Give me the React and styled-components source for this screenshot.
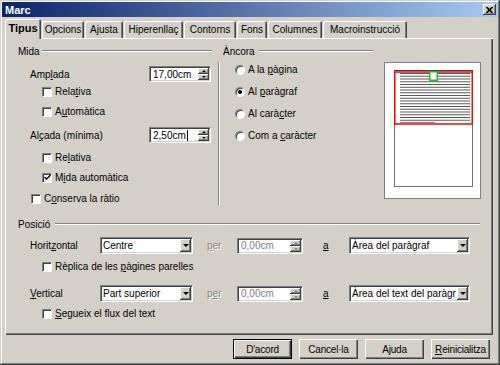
import React from "react";
import styled, { createGlobalStyle } from "styled-components";

const GlobalStyle = createGlobalStyle`
  html, body {
    margin: 0;
    padding: 0;
    background: #d4d0c8;
  }
  body {
    font-family: "Liberation Sans", Arial, sans-serif;
    font-size: 10px;
    color: #000;
  }
`;

const Window = styled.div`
  width: 500px;
  height: 365px;
  box-sizing: border-box;
  padding: 2px;
  background: #d4d0c8;
  box-shadow: inset -1px -1px #404040, inset 1px 1px #d4d0c8,
    inset -2px -2px #808080, inset 2px 2px #fff;
  display: flex;
  flex-direction: column;
`;

const TitleBar = styled.div`
  height: 15px;
  display: flex;
  align-items: center;
  justify-content: space-between;
  padding: 0 2px 0 3px;
  background: linear-gradient(to right, #0a246a, #a6caf0);
  color: #fff;
  font-weight: bold;
  font-size: 11px;
`;

const CloseButton = styled.div`
  width: 13px;
  height: 11px;
  box-sizing: border-box;
  background: #d4d0c8;
  box-shadow: inset -1px -1px #404040, inset 1px 1px #fff,
    inset -2px -2px #808080;
  display: flex;
  align-items: center;
  justify-content: center;
`;

const Body = styled.div`
  padding: 2px 5px 0 3px;
  display: flex;
  flex-direction: column;
`;

const TabRow = styled.div`
  display: flex;
  align-items: flex-end;
  gap: 1px;
  height: 19px;
  position: relative;
  z-index: 1;
`;

const Tab = styled.div`
  width: ${props => props.w}px;
  height: ${props => (props.active ? 20 : 17)}px;
  margin-bottom: ${props => (props.active ? -1 : 0)}px;
  box-sizing: border-box;
  background: #d4d0c8;
  border-radius: 2px 2px 0 0;
  box-shadow: inset 1px 1px #fff, inset -1px 0 #404040, inset -2px 0 #808080;
  display: flex;
  align-items: center;
  justify-content: center;
  padding-bottom: ${props => (props.active ? 2 : 0)}px;
  font-weight: ${props => (props.active ? "bold" : "normal")};
  font-size: ${props => (props.active ? 11 : 10)}px;
  white-space: nowrap;
`;

const Panel = styled.div`
  height: 297px;
  box-sizing: border-box;
  box-shadow: inset 1px 1px #fff, inset -1px -1px #404040,
    inset -2px -2px #808080;
  padding: 7px 0 0 13px;
  display: flex;
  flex-direction: column;
`;

const TopSection = styled.div`
  display: flex;
  height: 173px;
`;

const Group = styled.div`
  width: ${props => props.w}px;
  display: flex;
  flex-direction: column;
`;

const GroupHeader = styled.div`
  display: flex;
  align-items: center;
  gap: ${props => props.gap || 4}px;
  height: 12px;
`;

const EtchedLine = styled.div`
  flex: 1;
  height: 0;
  border-top: 1px solid #808080;
  border-bottom: 1px solid #fff;
`;

const VSep = styled.div`
  width: 0;
  height: 143px;
  border-left: 1px solid #808080;
  border-right: 1px solid #fff;
  margin: 17px 3px 0 6px;
`;

const FieldRow = styled.div`
  display: flex;
  align-items: center;
  height: ${props => props.h || 16}px;
  margin-top: ${props => props.mt || 0}px;
  padding-left: 12px;
  padding-right: ${props => props.pr || 0}px;
`;

const FieldLabel = styled.span`
  ${props => (props.w ? `width: ${props.w}px;` : "flex: 1;")}
  flex-shrink: 0;
  white-space: nowrap;
`;

const Disabled = styled.span`
  width: ${props => props.w}px;
  margin-left: ${props => props.ml}px;
  color: #808080;
  text-shadow: 1px 1px #fff;
`;

const Connector = styled.span`
  width: ${props => props.w}px;
  margin-left: ${props => props.ml}px;
`;

const Sunken = styled.div`
  width: ${props => props.w}px;
  height: ${props => props.h || 16}px;
  flex-shrink: 0;
  box-sizing: border-box;
  background: #fff;
  border: 1px solid;
  border-color: #808080 #fff #fff #808080;
  box-shadow: inset 1px 1px #404040, inset -1px -1px #d4d0c8;
  padding: 1px;
  display: flex;
  align-items: stretch;
  color: ${props => (props.disabled ? "#808080" : "#000")};
`;

const FieldText = styled.div`
  flex: 1;
  min-width: 0;
  overflow: hidden;
  white-space: nowrap;
  padding-left: ${props => props.pl || 2}px;
  display: flex;
  align-items: center;
`;

const Caret = styled.span`
  display: inline-block;
  width: 1px;
  height: 11px;
  background: #000;
  margin-left: 1px;
`;

const SpinButtons = styled.div`
  width: 11px;
  flex-shrink: 0;
  display: flex;
  flex-direction: column;
`;

const RaisedButton = styled.div`
  flex: ${props => (props.stack ? "1 1 0" : "0 0 11px")};
  width: 11px;
  background: #d4d0c8;
  box-shadow: inset -1px -1px #404040, inset 1px 1px #fff,
    inset -2px -2px #808080;
  display: flex;
  align-items: center;
  justify-content: center;
`;

const Arrow = styled.span`
  width: 0;
  height: 0;
  border-left: ${props => props.size}px solid transparent;
  border-right: ${props => props.size}px solid transparent;
  ${props =>
    props.up
      ? `border-bottom: ${props.size}px solid ${props.color};`
      : `border-top: ${props.size}px solid ${props.color};`}
`;

const CheckRow = styled.div`
  display: flex;
  align-items: center;
  gap: 3px;
  height: 13px;
  margin-top: ${props => props.mt || 0}px;
  padding-left: ${props => props.indent}px;
  white-space: nowrap;
`;

const CheckBox = styled.span`
  width: 10px;
  height: 10px;
  box-sizing: border-box;
  background: #fff;
  border: 1px solid;
  border-color: #808080 #fff #fff #808080;
  box-shadow: inset 1px 1px #404040;
  display: flex;
  align-items: center;
  justify-content: center;
  flex-shrink: 0;
`;

const RadioCircle = styled.span`
  width: 10px;
  height: 10px;
  box-sizing: border-box;
  border-radius: 50%;
  background: #fff;
  border: 1px solid;
  border-color: #808080 #fff #fff #808080;
  box-shadow: inset 1px 1px #404040;
  display: flex;
  align-items: center;
  justify-content: center;
  flex-shrink: 0;
`;

const RadioDot = styled.span`
  width: 4px;
  height: 4px;
  border-radius: 50%;
  background: #000;
`;

const PreviewBox = styled.div`
  width: 97px;
  height: 137px;
  margin: 17px 0 0 11px;
`;

const ButtonRow = styled.div`
  display: flex;
  justify-content: flex-end;
  gap: 7px;
  margin-top: 4px;
  padding-right: 3px;
`;

const Button = styled.div`
  width: 59px;
  height: 20px;
  box-sizing: border-box;
  display: flex;
  align-items: center;
  justify-content: center;
  letter-spacing: -0.2px;
  background: #d4d0c8;
  box-shadow: ${props =>
    props.primary
      ? "inset 1px 1px #000, inset -1px -1px #000, inset 2px 2px #fff, inset -2px -2px #404040, inset -3px -3px #808080"
      : "inset 1px 1px #fff, inset -1px -1px #404040, inset -2px -2px #808080"};
`;

const U = styled.span`
  text-decoration: underline;
`;

const tabs = [
  { label: "Tipus", w: 36, active: true },
  { label: "Opcions", w: 42 },
  { label: <>A<U>j</U>usta</>, w: 38 },
  { label: "Hiperenllaç", w: 59 },
  { label: "Contorns", w: 52 },
  { label: "Fons", w: 30 },
  { label: "Columnes", w: 54 },
  { label: "Macroinstrucció", w: 84 }
];

const Check = ({ checked, indent, mt, children }) => (
  <CheckRow indent={indent} mt={mt}>
    <CheckBox>
      {checked && (
        <svg width="7" height="7" viewBox="0 0 7 7">
          <path d="M0.5 3 L2.5 5 L6.5 1" fill="none" stroke="#000" strokeWidth="1.4" />
        </svg>
      )}
    </CheckBox>
    <span>{children}</span>
  </CheckRow>
);

const Radio = ({ checked, mt, children }) => (
  <CheckRow indent={12} mt={mt}>
    <RadioCircle>{checked && <RadioDot />}</RadioCircle>
    <span>{children}</span>
  </CheckRow>
);

const Spin = ({ w, value, disabled, caret }) => {
  const color = disabled ? "#808080" : "#000";
  return (
    <Sunken w={w} disabled={disabled}>
      <FieldText>
        {value}
        {caret && <Caret />}
      </FieldText>
      <SpinButtons>
        <RaisedButton stack>
          <Arrow up size={2} color={color} />
        </RaisedButton>
        <RaisedButton stack>
          <Arrow size={2} color={color} />
        </RaisedButton>
      </SpinButtons>
    </Sunken>
  );
};

const Combo = ({ w, value }) => (
  <Sunken w={w} h={17}>
    <FieldText pl={1}>{value}</FieldText>
    <RaisedButton>
      <Arrow size={3} color="#000" />
    </RaisedButton>
  </Sunken>
);

const Preview = () => {
  const lines = [];
  for (let i = 0; i < 18; i++) {
    const y = 11.5 + i * 2.75;
    lines.push(<line key={i} x1="16" y1={y} x2="86" y2={y} stroke="#5a5a5a" strokeWidth="1" />);
  }
  return (
    <PreviewBox>
      <svg width="97" height="137" viewBox="0 0 97 137">
        <rect x="0.5" y="0.5" width="96" height="136" fill="#fff" stroke="#808080" />
        <rect x="10.5" y="8.5" width="78" height="116" fill="#fff" stroke="#707070" />
        <line x1="10" y1="8.5" x2="89" y2="8.5" stroke="#404040" />
        {lines}
        <line x1="16" y1="60.5" x2="51" y2="60.5" stroke="#7088a8" />
        <rect x="10.75" y="10" width="77.5" height="52" fill="none" stroke="#ff0000" strokeWidth="1.5" />
        <rect x="45.75" y="9.75" width="7.5" height="8.5" fill="#fff" stroke="#20c020" strokeWidth="1.5" />
      </svg>
    </PreviewBox>
  );
};

export default function App() {
  return (
    <>
      <GlobalStyle />
      <Window>
        <TitleBar>
          <span>Marc</span>
          <CloseButton>
            <svg width="7" height="6" viewBox="0 0 7 6">
              <path d="M0.5 0 L6.5 6 M6.5 0 L0.5 6" stroke="#000" strokeWidth="1.6" />
            </svg>
          </CloseButton>
        </TitleBar>
        <Body>
          <TabRow>
            {tabs.map((t, i) => (
              <Tab key={i} w={t.w} active={t.active}>
                {t.label}
              </Tab>
            ))}
          </TabRow>
          <Panel>
            <TopSection>
              <Group w={194}>
                <GroupHeader gap={2}>
                  <span>Mida</span>
                  <EtchedLine />
                </GroupHeader>
                <FieldRow mt={9} pr={1}>
                  <FieldLabel>
                    Amp<U>l</U>ada
                  </FieldLabel>
                  <Spin w={62} value="17,00cm" />
                </FieldRow>
                <Check indent={24} mt={3}>
                  Rela<U>t</U>iva
                </Check>
                <Check indent={24} mt={7}>
                  A<U>u</U>tomàtica
                </Check>
                <FieldRow mt={9} pr={1}>
                  <FieldLabel>
                    Al<U>ç</U>ada (mínima)
                  </FieldLabel>
                  <Spin w={62} value="2,50cm" caret />
                </FieldRow>
                <Check indent={24} mt={8}>
                  Re<U>l</U>ativa
                </Check>
                <Check indent={24} mt={7} checked>
                  M<U>i</U>da automàtica
                </Check>
                <Check indent={13} mt={8}>
                  C<U>o</U>nserva la ràtio
                </Check>
              </Group>
              <VSep />
              <Group w={150}>
                <GroupHeader>
                  <span>Àncora</span>
                  <EtchedLine />
                </GroupHeader>
                <Radio mt={6}>
                  A la <U>p</U>àgina
                </Radio>
                <Radio mt={9} checked>
                  Al <U>p</U>aràgraf
                </Radio>
                <Radio mt={9}>
                  Al carà<U>c</U>ter
                </Radio>
                <Radio mt={9}>
                  Com a <U>c</U>aràcter
                </Radio>
              </Group>
              <Preview />
            </TopSection>
            <Group w={462}>
              <GroupHeader gap={5}>
                <span>Posició</span>
                <EtchedLine />
              </GroupHeader>
              <FieldRow mt={7} h={17}>
                <FieldLabel w={70}>
                  Horit<U>z</U>ontal
                </FieldLabel>
                <Combo w={93} value="Centre" />
                <Disabled w={30} ml={14}>
                  <U>p</U>er
                </Disabled>
                <Spin w={66} value="0,00cm" disabled />
                <Connector w={26} ml={20}>
                  <U>a</U>
                </Connector>
                <Combo w={121} value="Àrea del paràgraf" />
              </FieldRow>
              <Check indent={24} mt={6}>
                Rèplica de les <U>p</U>àgines parelles
              </Check>
              <FieldRow mt={12} h={17}>
                <FieldLabel w={70}>
                  <U>V</U>ertical
                </FieldLabel>
                <Combo w={93} value="Part superior" />
                <Disabled w={30} ml={14}>
                  p<U>e</U>r
                </Disabled>
                <Spin w={66} value="0,00cm" disabled />
                <Connector w={26} ml={20}>
                  <U>a</U>
                </Connector>
                <Combo w={121} value="Àrea del text del paràgr" />
              </FieldRow>
              <Check indent={24} mt={5}>
                <U>S</U>egueix el flux del text
              </Check>
            </Group>
          </Panel>
          <ButtonRow>
            <Button primary>D'acord</Button>
            <Button>Cancel·la</Button>
            <Button>
              A<U>j</U>uda
            </Button>
            <Button>
              <U>R</U>einicialitza
            </Button>
          </ButtonRow>
        </Body>
      </Window>
    </>
  );
}
